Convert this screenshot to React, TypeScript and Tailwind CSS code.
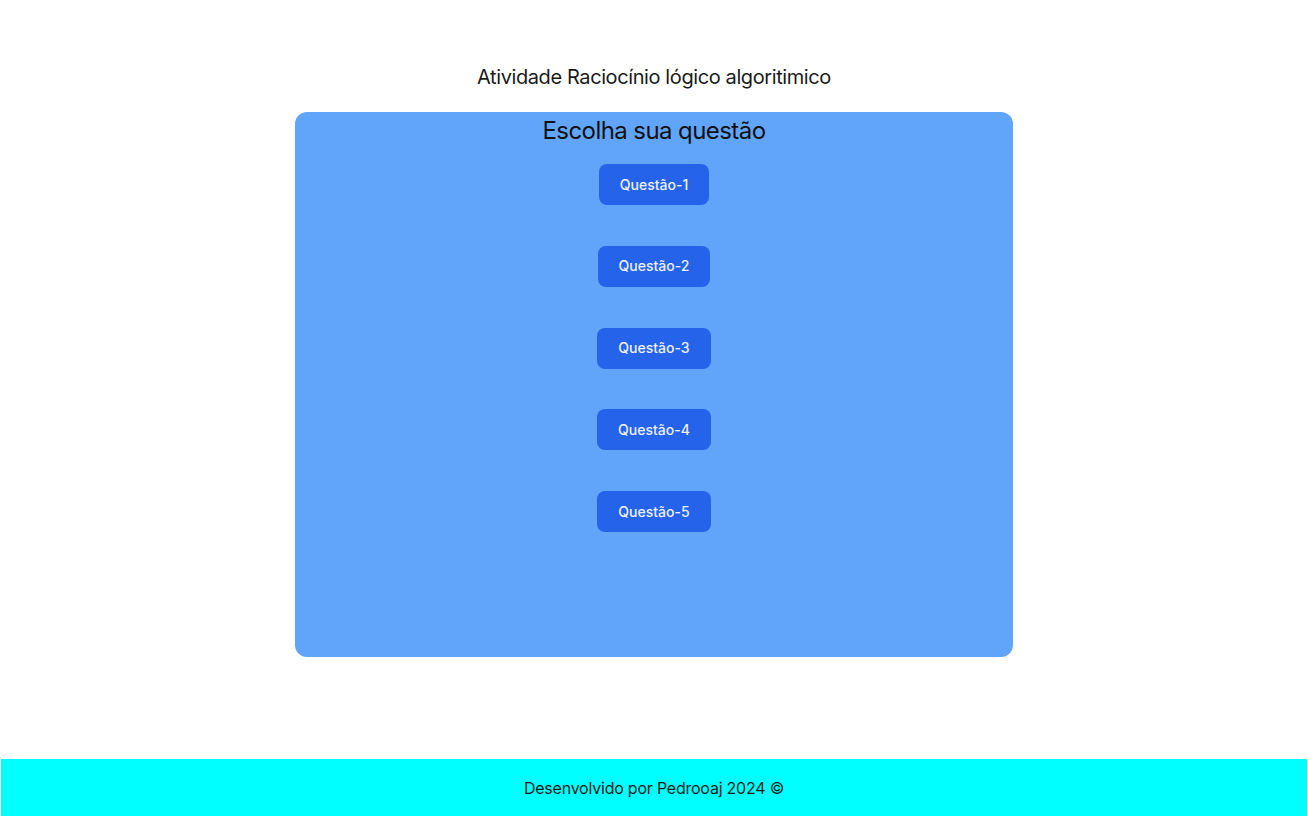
import React from "react";

export default function App() {
  const qs = [1, 2, 3, 4, 5];
  return (
    <div className="min-h-[816px] flex flex-col bg-white font-['Inter',sans-serif] text-[#1a1a1a]">
      <main className="flex-1 flex flex-col items-center pt-[63px]">
        <h1 className="text-xl leading-7 tracking-[-0.02em]">Atividade Raciocínio lógico algoritimico</h1>
        <section className="mt-[21px] w-[718px] h-[545px] rounded-xl bg-[#60a5fa] flex flex-col items-center">
          <h2 className="text-2xl leading-8 mt-[3px] text-[#111] tracking-[-0.024em]">Escolha sua questão</h2>
          <div className="mt-[17px] flex flex-col items-center gap-[40.75px]">
            {qs.map((q) => (
              <button
                key={q}
                className="h-[41px] px-[21px] rounded-lg bg-[#2563eb] text-[#eef2ff] text-sm font-medium"
              >
                Questão-{q}
              </button>
            ))}
          </div>
        </section>
      </main>
      <footer className="mx-px h-[57px] bg-[#00ffff] flex items-center justify-center text-base text-[#1a1a1a] tracking-[-0.014em]">
        Desenvolvido por Pedrooaj 2024 ©
      </footer>
    </div>
  );
}
